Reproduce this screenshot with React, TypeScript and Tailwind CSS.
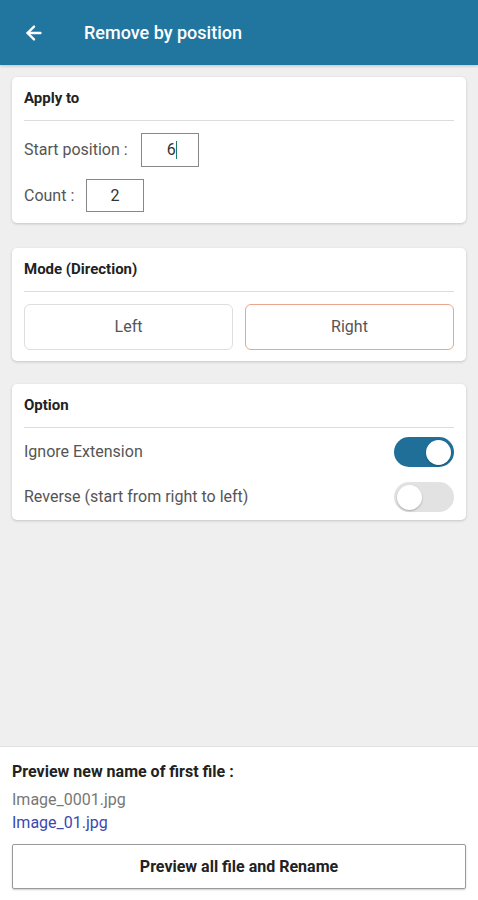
import { ArrowLeft } from 'lucide-react'

const cardCls = 'bg-white rounded-[5px] shadow-[0_1px_3px_rgba(0,0,0,0.18)] px-3'
const headingCls = 'text-[15px] font-bold text-[#222] h-[44px] flex items-center border-b border-[#dcdcdc]'

function Toggle({ on }: { on: boolean }) {
  return (
    <div
      className={`w-[60px] h-[30px] rounded-full flex items-center px-[3px] ${
        on ? 'bg-[#1f6f99] justify-end' : 'bg-[#e2e2e2] justify-start'
      }`}
    >
      <div className="w-[25px] h-[25px] rounded-full bg-white shadow-[0_1px_2px_rgba(0,0,0,0.25)]" />
    </div>
  )
}

export default function App() {
  return (
    <div className="h-[900px] flex flex-col bg-[#efefef] font-['Roboto',sans-serif]">
      {/* Toolbar */}
      <div className="h-[65px] bg-[#21769f] flex items-center shrink-0 shadow-[0_1px_3px_rgba(0,0,0,0.2)]">
        <ArrowLeft className="w-[22px] h-[22px] text-white ml-[23px]" strokeWidth={2.6} />
        <h1 className="ml-[39px] text-[18px] font-medium text-white -mt-[1px]">Remove by position</h1>
      </div>

      {/* Content */}
      <div className="flex-1 px-3 pt-3 flex flex-col">
        <div className={`${cardCls} pb-[11px]`}>
          <div className={headingCls}>Apply to</div>
          <div className="flex items-center mt-[12px] text-[16px] text-[#555]">
            <span className="w-[117px]">Start position :</span>
            <div className="w-[58px] h-[34px] border border-[#888] flex items-center justify-center text-[16px] text-[#333]">
              <span className="pl-[4px]">6</span>
              <span className="w-[1.5px] h-[18px] bg-[#1d7a6a]" />
            </div>
          </div>
          <div className="flex items-center mt-[12px] text-[16px] text-[#555]">
            <span className="w-[62px]">Count :</span>
            <div className="w-[58px] h-[33px] border border-[#888] flex items-center justify-center text-[16px] text-[#333]">2</div>
          </div>
        </div>

        <div className={`${cardCls} pb-[11px] mt-[25px]`}>
          <div className={headingCls}>Mode (Direction)</div>
          <div className="flex gap-3 mt-[12px]">
            <button className="flex-1 h-[46px] rounded-[6px] border border-[#dedede] text-[16px] text-[#555]">Left</button>
            <button className="flex-1 h-[46px] rounded-[6px] border-[1.5px] border-[#eba58e] text-[16px] text-[#555]">Right</button>
          </div>
        </div>

        <div className={`${cardCls} pb-[8px] mt-[23px]`}>
          <div className={headingCls}>Option</div>
          <div className="flex items-center justify-between mt-[9px] h-[30px]">
            <span className="text-[16px] text-[#555]">Ignore Extension</span>
            <Toggle on />
          </div>
          <div className="flex items-center justify-between mt-[15px] h-[30px]">
            <span className="text-[16px] text-[#555]">Reverse (start from right to left)</span>
            <Toggle on={false} />
          </div>
        </div>
      </div>

      {/* Bottom preview panel */}
      <div className="h-[154px] bg-white border-t border-[#e0e0e0] px-3 pt-[14px] shrink-0">
        <p className="text-[16px] font-bold text-[#222] leading-[22px]">Preview new name of first file :</p>
        <p className="text-[16px] text-[#777] mt-[7px] leading-[20px]">Image_0001.jpg</p>
        <p className="text-[16px] text-[#3b48b0] mt-[3px] leading-[20px]">Image_01.jpg</p>
        <button className="w-full h-[45px] mt-[11px] border-[1.5px] border-[#9a9a9a] rounded-[2px] text-[16px] font-bold text-[#222] shadow-[0_1px_2px_rgba(0,0,0,0.2)]">
          Preview all file and Rename
        </button>
      </div>
    </div>
  )
}
